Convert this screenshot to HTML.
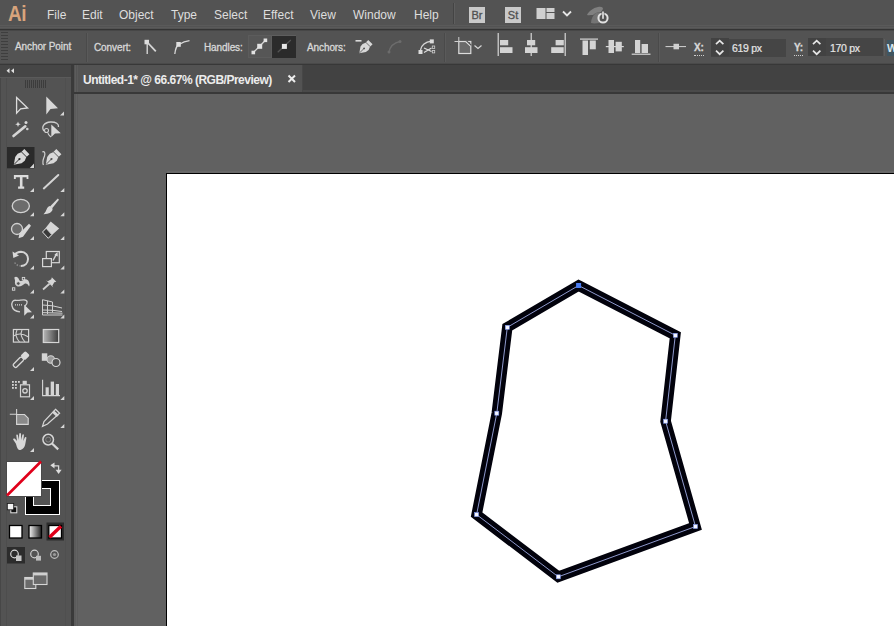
<!DOCTYPE html>
<html><head><meta charset="utf-8">
<style>
*{margin:0;padding:0;box-sizing:border-box}
html,body{width:894px;height:626px;overflow:hidden;background:#535353;font-family:"Liberation Sans",sans-serif}
.a{position:absolute}
.mi{position:absolute;top:8px;font-size:12px;color:#dedede;white-space:nowrap;line-height:14px}
.cl{position:absolute;font-size:10px;color:#d8d8d8;white-space:nowrap;line-height:12px;letter-spacing:-0.1px;-webkit-text-stroke:0.3px #d8d8d8}
svg{position:absolute;overflow:visible}
</style></head><body>
<!-- MENU BAR -->
<div class="a" style="left:0;top:0;width:894px;height:28px;background:#535353"></div>
<div class="a" style="left:0;top:25px;width:894px;height:1px;background:#5a5a5a"></div>
<div class="a" style="left:0;top:27px;width:894px;height:1px;background:#5a5a5a"></div>
<div class="a" style="left:0;top:29px;width:894px;height:1px;background:#343434"></div>
<div class="a" style="left:0;top:30px;width:894px;height:1px;background:#474747"></div>
<div class="a" style="left:0;top:32px;width:894px;height:1px;background:#585858"></div>
<div class="a" style="left:8px;top:1px;font-size:22px;font-weight:bold;color:#d8a47c;line-height:26px;letter-spacing:-0.5px;transform:scaleX(0.86);transform-origin:0 0">Ai</div>
<div class="mi" style="left:47px">File</div>
<div class="mi" style="left:82px">Edit</div>
<div class="mi" style="left:119px">Object</div>
<div class="mi" style="left:171px">Type</div>
<div class="mi" style="left:214px">Select</div>
<div class="mi" style="left:263px">Effect</div>
<div class="mi" style="left:310px">View</div>
<div class="mi" style="left:353px">Window</div>
<div class="mi" style="left:414px">Help</div>
<div class="a" style="left:453px;top:3px;width:1px;height:21px;background:#444"></div>
<div class="a" style="left:454px;top:3px;width:1px;height:21px;background:#5e5e5e"></div>
<div class="a" style="left:469px;top:7px;width:16px;height:16px;background:#c9c9c9;color:#505050;font-size:11px;font-weight:normal;-webkit-text-stroke:0.3px #505050;line-height:16px;text-align:center">Br</div>
<div class="a" style="left:505px;top:7px;width:16px;height:16px;background:#c9c9c9;color:#505050;font-size:11px;font-weight:normal;-webkit-text-stroke:0.3px #505050;line-height:16px;text-align:center">St</div>
<svg style="left:536px;top:8px" width="20" height="12" viewBox="0 0 20 12">
  <rect x="0.5" y="0" width="9" height="11" fill="#d0d0d0"/>
  <rect x="10.5" y="0" width="8" height="4" fill="#d0d0d0"/>
  <rect x="10.5" y="5" width="8" height="6" fill="#d0d0d0"/>
</svg>
<svg style="left:562px;top:10px" width="10" height="7" viewBox="0 0 10 7">
  <path d="M1 1.5 L5 5.5 L9 1.5" stroke="#e6e6e6" stroke-width="1.8" fill="none"/>
</svg>
<svg style="left:584px;top:3px" width="26" height="22" viewBox="0 0 26 22">
  <path d="M3 12 C5 8 9 5 14 4 C17 3.5 19 4 19 6 L17 9 C14 9 11 10 9 12 C7 12 5 12.5 3 12 Z" fill="#808080"/>
  <path d="M7 20 C7 16 9 12 12 10 C14 9 16 9 17 10 L15 20 C12 20.5 9 20.5 7 20 Z" fill="#747474"/>
  <circle cx="19" cy="15" r="4.6" stroke="#e0e0e0" stroke-width="2" fill="none"/>
  <rect x="17.6" y="8.3" width="2.8" height="7.8" fill="#535353"/>
  <rect x="18.2" y="8.5" width="1.6" height="7.3" fill="#e6e6e6"/>
</svg>

<!-- CONTROL BAR -->
<div class="a" style="left:0;top:31px;width:894px;height:33px;background:#535353"></div>
<div class="a" style="left:0;top:63px;width:894px;height:1px;background:#4a4a4a"></div>
<div class="a" style="left:0;top:64px;width:894px;height:1px;background:#383838"></div>
<svg style="left:0;top:31px" width="9" height="32" viewBox="0 0 9 32">
  <g fill="#3e3e3e">
    <rect x="1" y="1" width="7" height="1"/><rect x="1" y="4" width="7" height="1"/><rect x="1" y="7" width="7" height="1"/><rect x="1" y="10" width="7" height="1"/><rect x="1" y="13" width="7" height="1"/><rect x="1" y="16" width="7" height="1"/><rect x="1" y="19" width="7" height="1"/><rect x="1" y="22" width="7" height="1"/><rect x="1" y="25" width="7" height="1"/><rect x="1" y="28" width="7" height="1"/>
  </g>
</svg>
<div class="cl" style="left:15px;top:41px">Anchor Point</div>
<div class="a" style="left:86px;top:33px;width:1px;height:29px;background:#4a4a4a"></div>
<div class="a" style="left:87px;top:33px;width:1px;height:29px;background:#5a5a5a"></div>
<div class="cl" style="left:94px;top:41.5px">Convert:</div>
<div class="cl" style="left:204px;top:41.5px">Handles:</div>
<div class="cl" style="left:307px;top:41.5px">Anchors:</div>
<div class="a" style="left:444px;top:33px;width:1px;height:29px;background:#4a4a4a"></div>
<div class="a" style="left:445px;top:33px;width:1px;height:29px;background:#5a5a5a"></div>
<div class="a" style="left:658px;top:33px;width:1px;height:29px;background:#4a4a4a"></div>
<div class="a" style="left:659px;top:33px;width:1px;height:29px;background:#5a5a5a"></div>


<!-- convert icons -->
<svg style="left:140px;top:36px" width="60" height="22" viewBox="140 36 60 22">
  <rect x="144.5" y="39.8" width="4.5" height="4.5" fill="#dedede"/>
  <path d="M147.2 44 L147.2 54" stroke="#dedede" stroke-width="1.3"/>
  <path d="M148 43 L155.8 51.4" stroke="#d6d6d6" stroke-width="1.8"/>
  <path d="M174.8 54 C175.5 49 176 46 179 44.5 C182 42.5 185 41 189.5 40.6" stroke="#d8d8d8" stroke-width="1.3" fill="none"/>
  <rect x="176.3" y="42" width="4.5" height="4.8" fill="#dedede"/>
</svg>
<!-- handles buttons -->
<div class="a" style="left:248px;top:35px;width:24px;height:23px;background:#565656;border:1px solid #5c5c5c"></div>
<div class="a" style="left:272px;top:35px;width:24px;height:23px;background:#2b2b2b;border-top:1px solid #5e5e5e"></div>
<svg style="left:246px;top:34px" width="52" height="26" viewBox="246 34 52 26">
  <path d="M253.3 52.5 L265.5 40.3" stroke="#d6d6d6" stroke-width="1.3"/>
  <rect x="257.2" y="43.8" width="5" height="5" fill="#e2e2e2"/>
  <rect x="263.6" y="38.5" width="3.6" height="3.6" fill="#e2e2e2"/>
  <rect x="251.5" y="50.7" width="3.6" height="3.6" fill="#e2e2e2"/>
  <path d="M277.7 52.2 L290.8 40" stroke="#555" stroke-width="1.2"/>
  <rect x="281.9" y="43.9" width="5" height="5" fill="#e8e8e8"/>
</svg>
<!-- anchors icons -->
<svg style="left:350px;top:34px" width="90" height="26" viewBox="350 34 90 26">
  <rect x="355.5" y="40" width="6" height="1.6" fill="#dadada"/>
  <g transform="translate(365 47.5) rotate(45) scale(0.85)">
   <path d="M-3.6 -9 L3.6 -9 L3.6 -4.5 L5 -1 L4.5 3 L0 9.5 L-4.5 3 L-5 -1 L-3.6 -4.5 Z" fill="#d8d8d8"/>
   <path d="M-3.8 -5 L3.8 -5" stroke="#535353" stroke-width="0.9"/>
   <path d="M0 1 L0 9" stroke="#535353" stroke-width="0.9"/><circle cx="0" cy="1.5" r="1.1" fill="#535353"/>
  </g>
  <path d="M389 52 C390 47 393 43 400 41.5" stroke="#6c6c6c" stroke-width="1.3" fill="none"/>
  <circle cx="389" cy="52" r="1.5" fill="#6c6c6c"/><circle cx="400" cy="41.5" r="1.5" fill="#6c6c6c"/>
  <path d="M420.5 50 C421.5 45 425 42 431.5 41.2" stroke="#d6d6d6" stroke-width="1.3" fill="none"/>
  <rect x="418.5" y="50" width="4" height="4" fill="#dcdcdc"/>
  <rect x="429.8" y="39.4" width="4" height="4" fill="#dcdcdc"/>
  <path d="M424 48 L431.5 51.5 M424 52.5 L431.5 48" stroke="#dcdcdc" stroke-width="1.3"/>
  <rect x="432.3" y="46" width="2.4" height="2.4" fill="none" stroke="#cfcfcf" stroke-width="0.8"/>
  <rect x="432.3" y="50.5" width="2.4" height="2.4" fill="none" stroke="#cfcfcf" stroke-width="0.8"/>
</svg>
<!-- transform / align -->
<svg style="left:450px;top:32px" width="210" height="30" viewBox="450 32 210 30">
  <rect x="458.8" y="41.5" width="12" height="12" fill="#6a6a6a" stroke="#dcdcdc" stroke-width="1.2"/>
  <path d="M470.8 46 L466 41.5" stroke="#535353" stroke-width="3"/>
  <path d="M465.5 41.5 L470.8 46.5" stroke="#dcdcdc" stroke-width="1.1"/>
  <path d="M458.8 37 L458.8 41.5 M454.5 41.5 L458.8 41.5" stroke="#cfcfcf" stroke-width="1"/>
  <path d="M474.5 45.5 L478 48.5 L481.5 45.5" stroke="#d6d6d6" stroke-width="1.2" fill="none"/>
  <!-- align left -->
  <rect x="497.6" y="33" width="1.2" height="23" fill="#d8d8d8"/>
  <rect x="500" y="40" width="8.2" height="5.3" fill="#d4d4d4"/>
  <rect x="500" y="47.2" width="12.5" height="5.8" fill="#d4d4d4"/>
  <!-- align h center -->
  <rect x="530.6" y="33" width="1.2" height="23" fill="#d8d8d8"/>
  <rect x="527" y="40" width="8.2" height="5.3" fill="#d4d4d4"/>
  <rect x="525" y="47.2" width="12.5" height="5.8" fill="#d4d4d4"/>
  <!-- align right -->
  <rect x="564.6" y="33" width="1.2" height="23" fill="#d8d8d8"/>
  <rect x="555.6" y="40" width="8.2" height="5.3" fill="#d4d4d4"/>
  <rect x="551.2" y="47.2" width="12.5" height="5.8" fill="#d4d4d4"/>
</svg>
<svg style="left:575px;top:32px" width="120" height="30" viewBox="575 32 120 30">
  <!-- align top -->
  <rect x="580" y="38.5" width="18" height="1.2" fill="#d8d8d8"/>
  <rect x="582.5" y="40.5" width="5.5" height="14.5" fill="#d4d4d4"/>
  <rect x="589.8" y="40.5" width="6" height="8.8" fill="#d4d4d4"/>
  <!-- align v center -->
  <rect x="605.8" y="46" width="18" height="1.2" fill="#d8d8d8"/>
  <rect x="608.5" y="40" width="5.5" height="13" fill="#d4d4d4"/>
  <rect x="615.6" y="41.8" width="6.2" height="9.6" fill="#d4d4d4"/>
  <!-- align bottom -->
  <rect x="631.7" y="53.6" width="18.8" height="1.2" fill="#d8d8d8"/>
  <rect x="635" y="40" width="5.2" height="13" fill="#d4d4d4"/>
  <rect x="641.6" y="44" width="6.4" height="9" fill="#d4d4d4"/>
  <!-- reference point -->
  <rect x="665.5" y="46" width="20.5" height="1.1" fill="#c8c8c8"/>
  <rect x="673.5" y="43.8" width="5.5" height="5.5" fill="#d0d0d0"/>
</svg>
<div class="cl" style="left:694px;top:42px;font-weight:bold">X:</div>
<div class="a" style="left:694px;top:55px;width:10px;height:0;border-top:1px dotted #cfcfcf"></div>
<div class="a" style="left:711px;top:38.5px;width:75px;height:18px;background:#454545"></div>
<div class="a" style="left:711px;top:38px;width:18px;height:18px;background:#424242"></div>
<svg style="left:711px;top:38px" width="18" height="18" viewBox="0 0 18 18">
  <path d="M5 6.2 L8.7 2.6 L12.4 6.2 M5 12.6 L8.7 16.2 L12.4 12.6" stroke="#e6e6e6" stroke-width="1.7" fill="none"/>
</svg>
<div class="cl" style="left:732px;top:41.5px;font-size:10.5px;letter-spacing:-0.3px;color:#e6e6e6;-webkit-text-stroke:0.2px #e6e6e6">619 px</div>
<div class="cl" style="left:794px;top:42px;font-weight:bold">Y:</div>
<div class="a" style="left:794px;top:55px;width:9px;height:0;border-top:1px dotted #cfcfcf"></div>
<div class="a" style="left:808px;top:38px;width:75px;height:18px;background:#454545"></div>
<div class="a" style="left:808px;top:38px;width:18px;height:18px;background:#424242"></div>
<svg style="left:808px;top:38px" width="18" height="18" viewBox="0 0 18 18">
  <path d="M5 6.2 L8.7 2.6 L12.4 6.2 M5 12.6 L8.7 16.2 L12.4 12.6" stroke="#e6e6e6" stroke-width="1.7" fill="none"/>
</svg>
<div class="cl" style="left:830px;top:41.5px;font-size:10.5px;letter-spacing:-0.3px;color:#e6e6e6;-webkit-text-stroke:0.2px #e6e6e6">170 px</div>
<div class="a" style="left:884px;top:39px;width:1px;height:17px;background:#5e5e5e"></div>
<div class="a" style="left:887px;top:40px;width:7px;height:16px;background:#405560"></div>
<div class="a" style="left:887px;top:41.5px;font-size:11px;font-weight:bold;color:#d6e6ee;line-height:12px">W</div>

<!-- TOOLBAR -->
<div class="a" style="left:0;top:65px;width:74px;height:561px;background:#535353"></div>
<div class="a" style="left:0;top:65px;width:72px;height:13px;background:#464646"></div>
<div class="a" style="left:0;top:77px;width:72px;height:1px;background:#5a5a5a"></div>
<div class="a" style="left:0;top:78px;width:1px;height:548px;background:#474747"></div>
<div class="a" style="left:6px;top:78px;width:1px;height:548px;background:#4d4d4d"></div>
<div class="a" style="left:65px;top:78px;width:1px;height:548px;background:#4f4f4f"></div>
<div class="a" style="left:71px;top:65px;width:3px;height:561px;background:#3a3a3a"></div>
<svg style="left:5px;top:67px" width="12" height="8" viewBox="0 0 12 8">
  <path d="M4.5 1.3 L1.5 3.8 L4.5 6.3 Z M9 1.3 L6 3.8 L9 6.3 Z" fill="#e0e0e0"/>
</svg>
<svg style="left:25px;top:80px" width="23" height="8" viewBox="0 0 23 8" shape-rendering="crispEdges"><g fill="#3c3c3c"><rect x="0" y="0" width="1" height="8"/><rect x="2" y="0" width="1" height="8"/><rect x="4" y="0" width="1" height="8"/><rect x="6" y="0" width="1" height="8"/><rect x="8" y="0" width="1" height="8"/><rect x="10" y="0" width="1" height="8"/><rect x="12" y="0" width="1" height="8"/><rect x="14" y="0" width="1" height="8"/><rect x="16" y="0" width="1" height="8"/><rect x="18" y="0" width="1" height="8"/><rect x="20" y="0" width="1" height="8"/></g></svg>


<svg style="left:0;top:0" width="74" height="626" viewBox="0 0 74 626">
 <g fill="#d6d6d6" stroke="none">
  <!-- corner triangles -->
  <path d="M64 111.5 L64 115.6 L60 115.6 Z"/>
  <path d="M34 163.6 L34 168 L29.8 168 Z" />
  <path d="M34 188 L34 192 L30 192 Z"/><path d="M64.3 188 L64.3 192 L60.3 192 Z"/>
  <path d="M34 212.3 L34 216.3 L30 216.3 Z"/><path d="M64.3 212.3 L64.3 216.3 L60.3 216.3 Z"/>
  <path d="M34 236 L34 240 L30 240 Z"/><path d="M64.3 236 L64.3 240 L60.3 240 Z"/>
  <path d="M34 265.6 L34 269.6 L30 269.6 Z"/><path d="M64.3 265.6 L64.3 269.6 L60.3 269.6 Z"/>
  <path d="M34 289.6 L34 293.6 L30 293.6 Z"/><path d="M64.3 289.6 L64.3 293.6 L60.3 293.6 Z"/>
  <path d="M34 314.5 L34 318.5 L30 318.5 Z"/><path d="M64.3 314.5 L64.3 318.5 L60.3 318.5 Z"/>
  <path d="M34 367 L34 371 L30 371 Z"/>
  <path d="M34 396 L34 400 L30 400 Z"/><path d="M64.3 396 L64.3 400 L60.3 400 Z"/>
  <path d="M64.3 424 L64.3 428 L60.3 428 Z"/>
  <path d="M34 448 L34 452 L30 452 Z"/>
 </g>
 <!-- selected pen bg -->
 <rect x="7" y="147" width="27.5" height="21.3" fill="#2a2a2a"/>
 <path d="M34 163.6 L34 168 L29.8 168 Z" fill="#d6d6d6"/>
 <!-- row1: selection -->
 <path d="M16.6 97.5 L27.6 108 L20.6 108.9 L16.6 113.2 Z" fill="#535353" stroke="#dcdcdc" stroke-width="1.3" stroke-linejoin="miter"/>
 <path d="M46.3 96.4 L58 108.2 L50.5 109 L46.3 114.4 Z" fill="#d8d8d8"/>
 <!-- row2: magic wand -->
 <path d="M13.5 136 L25.3 126.3" stroke="#d6d6d6" stroke-width="2.6" stroke-linecap="round"/>
 <path d="M18 121.5 L18.8 123.5 L20.8 124.3 L18.8 125.1 L18 127.1 L17.2 125.1 L15.2 124.3 L17.2 123.5 Z" fill="#dadada"/>
 <circle cx="26" cy="122.5" r="1.5" fill="#d8d8d8"/><circle cx="27.3" cy="129" r="1.3" fill="#d0d0d0"/>
 <!-- lasso -->
 <path d="M44 131 C41 127 44 122.5 50.5 122 C56 121.8 59 124 58.5 127" stroke="#cfcfcf" stroke-width="1.3" fill="none"/>
 <circle cx="46.5" cy="130.5" r="2" stroke="#cfcfcf" stroke-width="1.1" fill="none"/>
 <path d="M48 133 C48 135 50 136 51 137" stroke="#cfcfcf" stroke-width="1.1" fill="none"/>
 <path d="M51.3 124.5 L60.8 133.2 L55 133.6 L51.3 137 Z" fill="#d8d8d8"/>
 <!-- row3: pen -->
 <g transform="translate(20.5 158) rotate(45)">
  <path d="M-3.6 -9 L3.6 -9 L3.6 -4.5 L5 -1 L4.5 3 L0 9.5 L-4.5 3 L-5 -1 L-3.6 -4.5 Z" fill="#d8d8d8"/>
  <path d="M-3.8 -5 L3.8 -5" stroke="#2a2a2a" stroke-width="0.9"/>
  <path d="M0 1 L0 9" stroke="#2a2a2a" stroke-width="0.9"/><circle cx="0" cy="1.5" r="1.1" fill="#2a2a2a"/>
 </g>
 <!-- curvature -->
 <path d="M42.3 152 C44.5 151 45.5 153 44.5 156 C43 159.5 42 162.5 43.5 165" stroke="#d2d2d2" stroke-width="1.2" fill="none"/>
 <g transform="translate(52.5 158) rotate(45)">
  <path d="M-3.6 -9 L3.6 -9 L3.6 -4.5 L5 -1 L4.5 3 L0 9.5 L-4.5 3 L-5 -1 L-3.6 -4.5 Z" fill="#d8d8d8"/>
  <path d="M-3.8 -5 L3.8 -5" stroke="#535353" stroke-width="0.9"/>
  <path d="M0 1 L0 9" stroke="#535353" stroke-width="0.9"/><circle cx="0" cy="1.5" r="1.1" fill="#535353"/>
 </g>
 <!-- row4: type -->
 <path d="M13.9 175 L28.4 175 L28.4 179 L26.6 179 L26.6 177.3 L22.5 177.3 L22.5 186.6 L24.2 186.6 L24.2 188.7 L18.1 188.7 L18.1 186.6 L19.9 186.6 L19.9 177.3 L15.8 177.3 L15.8 179 L13.9 179 Z" fill="#dcdcdc"/>
 <path d="M43.8 188.4 L58.3 175" stroke="#d4d4d4" stroke-width="2" stroke-linecap="round"/>
 <!-- row5: ellipse -->
 <ellipse cx="20.8" cy="206" rx="8.6" ry="6.6" fill="#6c6c6c" stroke="#d2d2d2" stroke-width="1.3"/>
 <!-- paintbrush -->
 <path d="M57.8 198.5 L59 199.7 L52 208.5 L50 206.5 Z" fill="#d8d8d8"/>
 <path d="M50 206 L52.6 208.8 C52.5 212 49 214.3 43.5 214.2 C45.5 212.5 46 210.5 47 208.5 C47.8 207 48.8 206.3 50 206 Z" fill="#d8d8d8"/>
 <!-- row6: shaper -->
 <circle cx="17" cy="229" r="5.5" fill="#6a6a6a" stroke="#d0d0d0" stroke-width="1.3"/>
 <path d="M31 225.8 L29 223.8 L19.5 233.3 L18.5 238.3 L23 236.8 Z" fill="#d8d8d8"/>
 <!-- eraser -->
 <path d="M50.7 221.5 L59.2 228.5 L48.3 238.3 L42.5 232 Z" fill="#d6d6d6"/>
 <path d="M42.5 232 L46.2 228.3 L51.8 234.6 L48.3 238.3 Z" fill="#3a3a3a" stroke="#d6d6d6" stroke-width="1"/>
 <!-- row7: rotate -->
 <path d="M14.5 255 C16.5 252.3 19 251.8 21 251.8 C25.5 252 28.2 255.5 28 259.3 C27.8 263 25 265.8 21 266" stroke="#d4d4d4" stroke-width="2" fill="none"/>
 <path d="M21 266 C18 266 15.5 264.5 14.5 262" stroke="#8a8a8a" stroke-width="1.5" fill="none" stroke-dasharray="1.5 1.5"/>
 <path d="M12.5 251.5 L13.3 258 L19 255.5 Z" fill="#d8d8d8"/>
 <!-- scale -->
 <rect x="46.3" y="251.5" width="13" height="11.2" fill="none" stroke="#d6d6d6" stroke-width="1.2"/>
 <rect x="42.6" y="258.6" width="8.8" height="8" fill="#535353" stroke="#d6d6d6" stroke-width="1.2"/>
 <path d="M53 260.5 L56.8 253.5" stroke="#d6d6d6" stroke-width="1.4"/>
 <path d="M57.5 252 L57.8 256.5 L54.3 255 Z" fill="#d8d8d8"/>
 <!-- row8: width -->
 <path d="M14.3 277.5 C16 276 18 277 19 279.5 C20 282 22 281 23.5 280 C25.5 278.5 28 279 29 282 C30 284.5 29.5 286 29 286.5 C28 284 26.5 283 25 283.5 C23 284.5 21.5 286.5 18.5 286.5 C16 286.5 14.5 284 15 281.5 C15.2 280 14.5 278.7 14.3 277.5 Z" fill="#d4d4d4"/>
 <circle cx="18.3" cy="283.5" r="1.8" fill="#535353" stroke="#cfcfcf" stroke-width="0.8"/>
 <rect x="22.3" y="277.4" width="2.4" height="2.4" fill="#535353" stroke="#d8d8d8" stroke-width="0.9"/>
 <rect x="12.4" y="287.8" width="2.4" height="2.4" fill="#535353" stroke="#d8d8d8" stroke-width="0.9"/>
 <!-- puppet pin -->
 <path d="M50.5 276 L56.3 281.8 L54.3 282.3 L52.3 285.8 L53.3 287.5 L46 280.3 L47.8 281.2 L51.3 279.2 L51.8 277.3 Z" fill="#d6d6d6"/>
 <path d="M49.5 283.8 L43 289.5" stroke="#d0d0d0" stroke-width="1.8"/>
 <!-- row9: shape builder -->
 <path d="M25 306 C28 303 28 300 24 299.8 C21 299.7 19 301 16 300.3 C12.5 299.7 11.3 303 12 306 C12.6 309 15.5 311.5 20 311.8" stroke="#d0d0d0" stroke-width="1.3" fill="none"/>
 <path d="M15 304.8 L23 304.8" stroke="#d8d8d8" stroke-width="1.2" stroke-dasharray="1 1"/>
 <path d="M24.2 304.8 L32 312.2 L27.5 312.5 L24.2 315.8 Z" fill="#d8d8d8"/>
 <!-- perspective grid -->
 <path d="M42.5 299.7 L42.5 315 L62.5 315 M42.5 299.7 L52.5 302 L52.5 312.5 M47.5 300.8 L47.5 314 M42.5 305 L52.5 305.8 M42.5 310 L52.5 310.3 M52.5 305.8 L62 308 M52.5 310.3 L62 311.5 M42.5 312.6 L62.5 313.2" stroke="#d0d0d0" stroke-width="1" fill="none"/>
 <!-- row10: mesh -->
 <rect x="13.4" y="329.5" width="15.2" height="12.6" fill="none" stroke="#d4d4d4" stroke-width="1.2"/>
 <path d="M17 330 C15 334 16 338 19.5 342 M22 330 C20 334 21.5 338 25 342 M13.5 336 C18 333 24 334 28.5 337" stroke="#cfcfcf" stroke-width="1.1" fill="none"/>
 <defs><linearGradient id="gtool" x1="0" x2="1" y1="0" y2="0"><stop offset="0" stop-color="#b8b8b8"/><stop offset="1" stop-color="#3a3a3a"/></linearGradient>
 <linearGradient id="gbtn" x1="0" x2="1" y1="0" y2="0"><stop offset="0" stop-color="#f4f4f4"/><stop offset="1" stop-color="#202020"/></linearGradient></defs>
 <rect x="43.3" y="329.5" width="15.4" height="13" fill="url(#gtool)" stroke="#d6d6d6" stroke-width="1.2"/>
 <!-- row11: eyedropper -->
 <g transform="translate(20.5 360.2) rotate(-45)">
  <rect x="-9" y="-2.2" width="12" height="4.4" rx="1.5" fill="#535353" stroke="#d6d6d6" stroke-width="1.3"/>
  <rect x="3" y="-3.2" width="7" height="6.4" rx="1.5" fill="#dadada"/>
 </g>
 <!-- blend -->
 <rect x="41.8" y="353.3" width="5.5" height="7.5" fill="#d4d4d4"/>
 <circle cx="50.8" cy="359.5" r="3.8" fill="#9a9a9a" stroke="#d6d6d6" stroke-width="1.1"/>
 <circle cx="56" cy="362.5" r="4" fill="#535353" stroke="#d6d6d6" stroke-width="1.2"/>
 <!-- row12: symbol sprayer -->
 <g fill="#d4d4d4"><rect x="12" y="381" width="1.8" height="1.8"/><rect x="15" y="381" width="1.8" height="1.8"/><rect x="18" y="381" width="1.8" height="1.8"/><rect x="12" y="384" width="1.8" height="1.8"/><rect x="15" y="384" width="1.8" height="1.8"/><rect x="12" y="387" width="1.8" height="1.8"/><rect x="15" y="387" width="1.8" height="1.8"/></g>
 <rect x="22.6" y="380.8" width="4.2" height="3.5" fill="#d4d4d4"/>
 <rect x="20.5" y="384.8" width="9" height="12" fill="#535353" stroke="#d4d4d4" stroke-width="1.2"/>
 <circle cx="25" cy="390.8" r="2.2" fill="none" stroke="#d4d4d4" stroke-width="1.3"/>
 <!-- graph -->
 <path d="M42.6 379.7 L42.6 395.6 L60 395.6" stroke="#d6d6d6" stroke-width="1.1" fill="none"/>
 <rect x="45.6" y="387.3" width="3.2" height="8" fill="#d4d4d4"/>
 <rect x="50.7" y="381.6" width="3.3" height="13.8" fill="#d4d4d4"/>
 <rect x="55.8" y="384" width="3.2" height="11.5" fill="#d4d4d4"/>
 <!-- row13: artboard -->
 <path d="M9.8 414.3 L17 414.3 M16.6 409 L16.6 414" stroke="#cfcfcf" stroke-width="1.1"/>
 <path d="M16.6 414.5 L24.5 414.5 L28.2 418.2 L28.2 424.4 L16.6 424.4 Z" fill="#8a8a8a" stroke="#d6d6d6" stroke-width="1.1"/>
 <!-- slice -->
 <path d="M55.5 409.3 L59.6 413.3 L47.5 424 L42.5 426.3 L44 421.5 Z" fill="#535353" stroke="#d6d6d6" stroke-width="1.2"/>
 <path d="M53 411.5 L57.8 416" stroke="#d6d6d6" stroke-width="3"/>
 <!-- row14: hand -->
 <path d="M15.8 443.5 L13.3 439.8 C12.7 438.8 14 438 15 438.8 L17 441 L16.3 435.5 C16.2 434.3 17.8 434.2 18 435.4 L18.8 440 L19.2 434 C19.3 432.8 20.9 432.8 21 434 L21.2 440 L22.3 435 C22.5 434 24 434.2 23.9 435.3 L23.3 441 L24.8 437.5 C25.2 436.5 26.6 437 26.4 438 L25.3 444 C24.7 447.5 22.5 450 19.5 450 C17.5 450 16.5 445.5 15.8 443.5 Z" fill="#d8d8d8"/>
 <circle cx="48.2" cy="439.6" r="5.3" fill="none" stroke="#d6d6d6" stroke-width="1.5"/>
 <circle cx="48.2" cy="439.6" r="2.5" fill="none" stroke="#8a8a8a" stroke-width="0.9"/>
 <path d="M52 443.5 L58.2 449.4" stroke="#d6d6d6" stroke-width="2.2"/>
</svg>


<!-- fill / stroke -->
<div class="a" style="left:25px;top:480px;width:35px;height:35px;background:#000;border:1px solid #fff"></div>
<div class="a" style="left:33px;top:488px;width:18px;height:18px;background:#535353;border:1px solid #fff"></div>
<div class="a" style="left:6px;top:461px;width:36px;height:36px;background:#fff;border:1px solid #4a4a4a"></div>
<svg style="left:0;top:0" width="74" height="626" viewBox="0 0 74 626">
 <path d="M7 495.5 L41 461.5" stroke="#e0001a" stroke-width="2.6"/>
 <!-- swap -->
 <path d="M53.5 465.8 L58.6 465.8 L58.6 470.5" stroke="#d6d6d6" stroke-width="1.3" fill="none"/>
 <path d="M50.3 465.3 L54.5 462.5 L54.5 468.5 Z" fill="#dcdcdc"/>
 <path d="M55.6 469.8 L61.6 469.8 L58.6 474 Z" fill="#dcdcdc"/>
 <!-- default -->
 <rect x="10.8" y="506.8" width="6" height="6" fill="#111" stroke="#e6e6e6" stroke-width="1"/>
 <rect x="7.3" y="503.4" width="6.4" height="6.4" fill="#f4f4f4" stroke="#1a1a1a" stroke-width="0.8"/>
 <!-- color mode buttons -->
 <rect x="9.5" y="525.5" width="12.5" height="12.5" fill="#fff" stroke="#000" stroke-width="1.3"/>
 <rect x="29" y="525.5" width="12.5" height="12.5" fill="url(#gbtn2)" stroke="#000" stroke-width="1.3"/>
 <defs><linearGradient id="gbtn2" x1="0" x2="1" y1="0" y2="0"><stop offset="0" stop-color="#f6f6f6"/><stop offset="1" stop-color="#1e1e1e"/></linearGradient></defs>
 <rect x="46.5" y="522.5" width="17.5" height="18" fill="#2c2c2c"/>
 <rect x="48.8" y="525.5" width="12.7" height="12.5" fill="#fff" stroke="#000" stroke-width="1.3"/>
 <path d="M49.5 537.3 L61 526.2" stroke="#e0001a" stroke-width="3.4"/>
 <!-- draw modes -->
 <rect x="7" y="547" width="18" height="16.5" fill="#2c2c2c"/>
 <circle cx="14.5" cy="554" r="3.8" fill="none" stroke="#d6d6d6" stroke-width="1.2"/>
 <rect x="16" y="555.5" width="5.5" height="5.5" fill="#c6c6c6"/>
 <circle cx="34.5" cy="554" r="3.8" fill="none" stroke="#cfcfcf" stroke-width="1.2"/>
 <rect x="36" y="555.8" width="5" height="4.8" fill="#bdbdbd"/>
 <circle cx="54.5" cy="554.5" r="3.8" fill="none" stroke="#bdbdbd" stroke-width="1.2"/>
 <circle cx="54.5" cy="554.5" r="1.6" fill="#9a9a9a"/>
 <!-- screen mode -->
 <rect x="24.8" y="577.5" width="11" height="11" fill="#6a6a6a" stroke="#d6d6d6" stroke-width="1.1"/>
 <rect x="24.8" y="577.5" width="11" height="2.2" fill="#cfcfcf"/>
 <rect x="33.3" y="573" width="13.7" height="11.5" fill="#6a6a6a" stroke="#d6d6d6" stroke-width="1.1"/>
 <rect x="33.3" y="573" width="13.7" height="2.4" fill="#cfcfcf"/>
</svg>

<!-- TAB BAR + CANVAS -->
<div class="a" style="left:74px;top:65px;width:820px;height:29px;background:#424242"></div>
<div class="a" style="left:74px;top:65px;width:229px;height:28px;background:#535353"></div>
<div class="a" style="left:75px;top:65px;width:1px;height:28px;background:#5c5c5c"></div>
<div class="a" style="left:77px;top:65px;width:1px;height:28px;background:#5a5a5a"></div>
<div class="a" style="left:302px;top:65px;width:1px;height:28px;background:#474747"></div>
<div class="a" style="left:303px;top:90px;width:591px;height:2px;background:#4a4a4a"></div>
<div class="a" style="left:74px;top:92px;width:820px;height:2px;background:#383838"></div>
<div class="a" style="left:83px;top:73px;font-size:12px;font-weight:bold;letter-spacing:-0.5px;color:#ececec;line-height:14px;white-space:nowrap">Untitled-1* @ 66.67% (RGB/Preview)</div>
<svg style="left:287px;top:74px" width="10" height="10" viewBox="0 0 10 10">
  <path d="M1.5 1.5 L8 8 M8 1.5 L1.5 8" stroke="#ededed" stroke-width="2"/>
</svg>
<div class="a" style="left:74px;top:94px;width:820px;height:532px;background:#616161"></div>
<div class="a" style="left:167px;top:171px;width:727px;height:2px;background:#686868"></div>
<div class="a" style="left:74px;top:94px;width:4px;height:532px;background:#5b5b5b"></div>
<div class="a" style="left:76px;top:94px;width:1px;height:532px;background:#626262"></div>
<div class="a" style="left:166px;top:173px;width:728px;height:453px;background:#fff;border-left:1px solid #000;border-top:1px solid #000"></div>

<svg style="left:0;top:0" width="894" height="626" viewBox="0 0 894 626">
  <polygon points="578.6,285.5 675.3,335.3 665.6,421.2 695.5,526.5 558.3,576.8 476.6,514.6 496.8,413.2 507.3,327.3" fill="none" stroke="#02020c" stroke-width="10.5" stroke-linejoin="miter"/>
  <polygon points="578.6,285.5 675.3,335.3 665.6,421.2 695.5,526.5 558.3,576.8 476.6,514.6 496.8,413.2 507.3,327.3" fill="none" stroke="#b2c0ff" stroke-width="0.8"/>

 <g fill="#f4f6ff" stroke="#7d95f0" stroke-width="0.6">
  <rect x="673.3" y="333.3" width="4" height="4"/>
  <rect x="663.6" y="419.2" width="4" height="4"/>
  <rect x="693.5" y="524.5" width="4" height="4"/>
  <rect x="556.3" y="574.8" width="4" height="4"/>
  <rect x="474.6" y="512.6" width="4" height="4"/>
  <rect x="494.8" y="411.2" width="4" height="4"/>
  <rect x="505.3" y="325.3" width="4" height="4"/>
 </g>
 <rect x="576.1" y="283" width="5" height="5" fill="#4a7cf2"/>
</svg>
</body></html>
